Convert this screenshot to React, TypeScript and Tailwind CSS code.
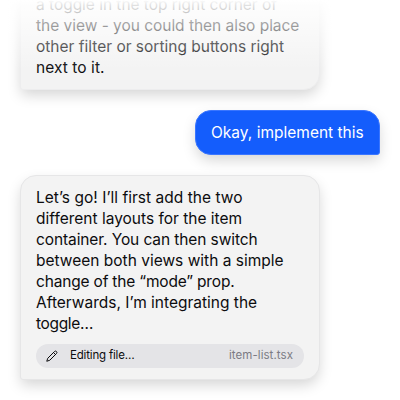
import React from "react";

type Line = { text: string; className?: string };

const firstReply: Line[] = [
  { text: "a toggle in the top right corner of", className: "tracking-[-0.03px]" },
  { text: "the view - you could then also place", className: "tracking-[-0.03px]" },
  { text: "other filter or sorting buttons right" },
  { text: "next to it.", className: "tracking-[0.06px]" },
];

const secondReply: Line[] = [
  { text: "Let’s go! I’ll first add the two", className: "tracking-[0.03px]" },
  { text: "different layouts for the item" },
  { text: "container. You can then switch", className: "tracking-[-0.1px]" },
  { text: "between both views with a simple" },
  { text: "change of the “mode” prop.", className: "tracking-[-0.18px]" },
  { text: "Afterwards, I’m integrating the" },
  { text: "toggle…", className: "tracking-[-0.35px]" },
];

function Lines({ lines }: { lines: Line[] }) {
  return (
    <div className="text-[15.5px] leading-[21px] text-[#0c0c0e]">
      {lines.map((line) => (
        <div key={line.text} className="whitespace-nowrap">
          <span className={line.className}>{line.text}</span>
        </div>
      ))}
    </div>
  );
}

export default function App() {
  return (
    <div className="relative flex h-[400px] w-[400px] flex-col overflow-hidden bg-white px-5 font-['Inter',sans-serif]">
      <div className="-mt-5 flex h-[110px] w-[300px] shrink-0 flex-col justify-end rounded-2xl rounded-bl-[3px] border border-[#ededee] bg-[#f3f3f3] px-[15px] pb-[11px] shadow-[0_6px_14px_-1px_rgba(0,0,0,0.17)]">
        <Lines lines={firstReply} />
      </div>
      <div className="mt-5 flex h-[45px] w-[185px] shrink-0 items-center self-end rounded-2xl rounded-br-[3px] border border-[#3a76ff] bg-[#145dfc] pl-[15px] text-[15.5px] whitespace-nowrap text-white shadow-[0_6px_14px_-1px_rgba(0,0,0,0.17)]">
        Okay, implement this
      </div>
      <div className="mt-5 h-[205px] w-[300px] shrink-0 rounded-2xl rounded-bl-[3px] border border-[#e6e6e7] bg-[#f3f3f3] px-[15px] pt-[11px] shadow-[0_6px_14px_-1px_rgba(0,0,0,0.17)]">
        <Lines lines={secondReply} />
        <div className="mt-[10px] flex h-6 items-center rounded-full bg-[#e4e4e7] pr-[11px] pl-[10px] text-[11.5px] text-[#0c0c0e]">
          <svg className="h-3 w-3" viewBox="0 0 24 24" fill="none" stroke="currentColor" strokeWidth="2" strokeLinejoin="round">
            <path d="M1.5 22.5l2-6L17 3a2.83 2.83 0 0 1 4 4L7.5 20.5z" />
            <path d="M15 5l4 4" />
          </svg>
          <span className="ml-3 whitespace-nowrap tracking-[-0.18px]">Editing file…</span>
          <span className="ml-auto whitespace-nowrap text-[#7b7b84] tracking-[0.06px]">item-list.tsx</span>
        </div>
      </div>
      <div className="pointer-events-none absolute inset-x-0 top-0 h-[70px] bg-[linear-gradient(to_bottom,#fff_0px,rgba(255,255,255,0.88)_5px,rgba(255,255,255,0)_70px)]" />
    </div>
  );
}
